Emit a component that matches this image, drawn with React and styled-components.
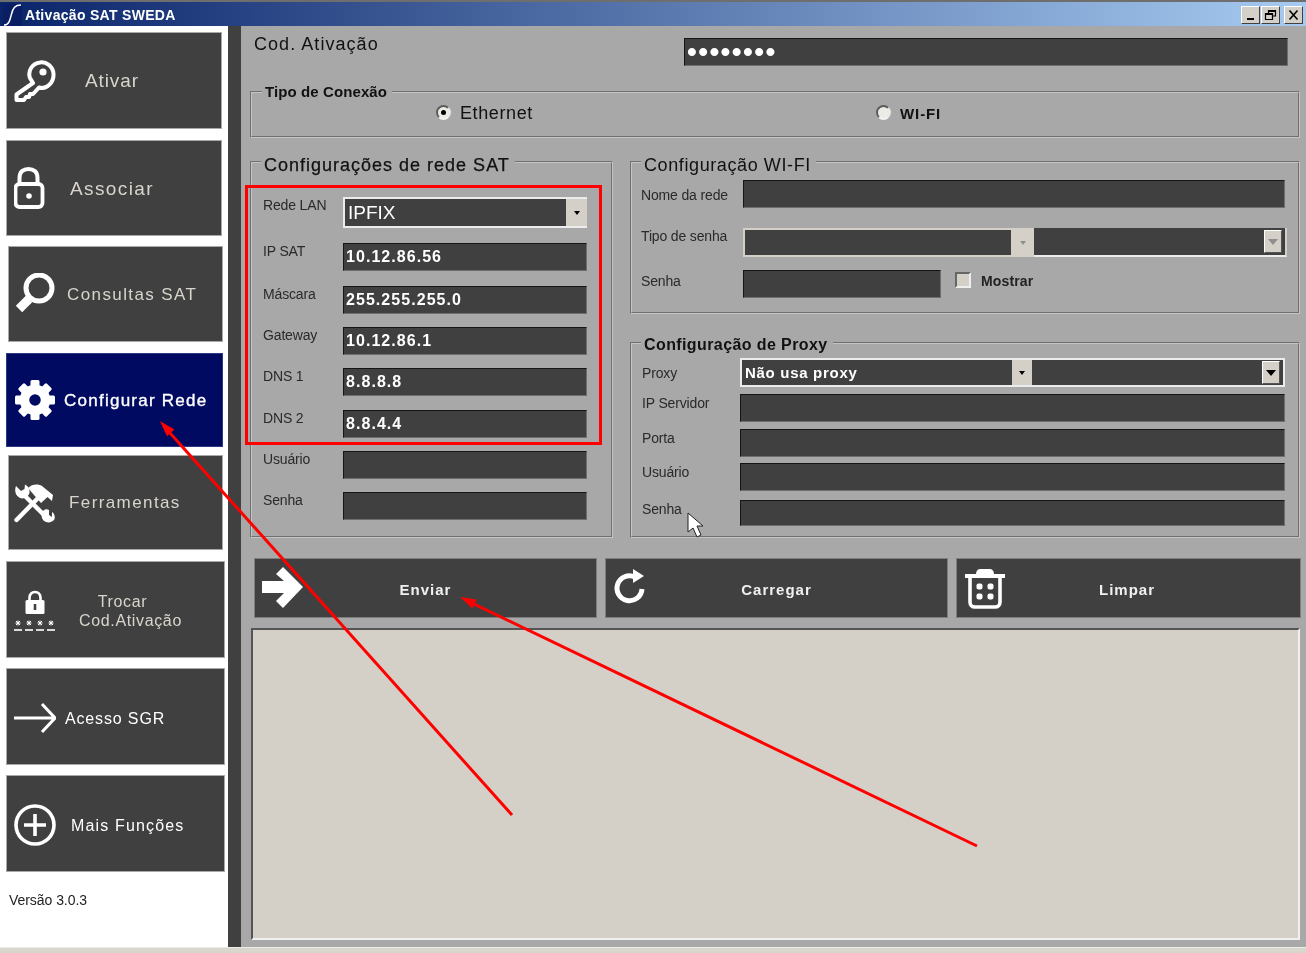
import React from 'react';
import styled, { createGlobalStyle } from 'styled-components';

const GlobalStyle = createGlobalStyle`
  html, body {
    margin: 0;
    padding: 0;
    background: #fff;
  }
  * {
    box-sizing: border-box;
  }
`;

const Page = styled.div`
  position: relative;
  width: 1306px;
  height: 953px;
  overflow: hidden;
`;

const Screen = styled.div`
  width: 1306px;
  height: 953px;
  display: flex;
  flex-direction: column;
  background: #fff;
  font-family: 'Liberation Sans', Arial, sans-serif;
  filter: blur(0.35px);
`;

const TitleBar = styled.div`
  height: 26px;
  flex: none;
  display: flex;
  align-items: center;
  padding: 2px 3px 0 3px;
  border-top: 2px solid #6e6e6e;
  background: linear-gradient(90deg, #0a246a 0%, #a6caf0 100%);
`;

const TitleLogo = styled.svg`
  width: 19px;
  height: 22px;
  flex: none;
`;

const TitleText = styled.span`
  margin-left: 3px;
  color: #fff;
  font-size: 14px;
  font-weight: bold;
  letter-spacing: 0.3px;
`;

const WindowButtons = styled.div`
  margin-left: auto;
  display: flex;
`;

const WindowButton = styled.div`
  width: 19px;
  height: 18px;
  margin-left: ${p => p.$gap || 0}px;
  background: #d4d0c8;
  border: 1px solid;
  border-color: #fff #404040 #404040 #fff;
  display: flex;
  align-items: center;
  justify-content: center;

  svg {
    width: 13px;
    height: 12px;
  }
`;

const Body = styled.div`
  flex: 1;
  display: flex;
  min-height: 0;
`;

const Sidebar = styled.aside`
  width: 228px;
  flex: none;
  display: flex;
  flex-direction: column;
  background: #fff;
`;

const SideButton = styled.div`
  width: ${p => p.$width}px;
  height: ${p => p.$height}px;
  margin-top: ${p => p.$top}px;
  margin-left: ${p => p.$left}px;
  flex: none;
  display: flex;
  align-items: center;
  padding-left: ${p => 14 - p.$left}px;
  padding-top: ${p => p.$drop || 0}px;
  background: ${p => (p.$active ? '#000a60' : '#404040')};
  border: 1px solid ${p => (p.$active ? '#2a3a80' : '#a9a9a9')};
`;

const SideIcon = styled.svg`
  width: 42px;
  height: 42px;
  flex: none;
  margin-left: -1px;
`;

const SideLabel = styled.span`
  margin-left: ${p => p.$offset}px;
  color: ${p => (p.$bright ? '#fff' : '#d8d5cd')};
  font-size: ${p => p.$size || 17}px;
  letter-spacing: ${p => p.$spacing ?? 1}px;
  line-height: 19px;
  text-align: center;
  white-space: nowrap;
  -webkit-text-stroke: ${p => (p.$heavy ? '0.35px' : '0')};
`;

const SideLine = styled.span`
  display: block;
  padding-right: ${p => p.$shift || 0}px;
`;

const Version = styled.div`
  margin: 20px 0 0 9px;
  color: #222;
  font-size: 14px;
  letter-spacing: -0.05px;
`;

const Divider = styled.div`
  width: 13px;
  flex: none;
  background: #404040;
`;

const Content = styled.main`
  flex: 1;
  min-width: 0;
  display: flex;
  flex-direction: column;
  padding: 0 6px 0 9px;
  background: #a8a8a8;
`;

const CodRow = styled.div`
  display: flex;
  padding: 12px 0 0 4px;
`;

const CodLabel = styled.div`
  width: 430px;
  color: #111;
  font-size: 18px;
  letter-spacing: 1.05px;
  line-height: 12px;
`;

const Group = styled.fieldset`
  margin: ${p => p.$top || 0}px 0 0;
  padding: 0 0 0 ${p => p.$pad || 0}px;
  min-width: 0;
  width: ${p => (p.$width ? `${p.$width}px` : 'auto')};
  height: ${p => p.$height}px;
  border: 2px groove #c4c4c4;
`;

const GroupTitle = styled.legend`
  height: 18px;
  margin-left: ${p => p.$shift ?? 0}px;
  padding: 0 5px 0 3px;
  color: #111;
  font-size: ${p => p.$size || 18}px;
  font-weight: ${p => (p.$bold ? 'bold' : 'normal')};
  letter-spacing: ${p => p.$spacing ?? 1}px;
  line-height: ${p => p.$line || 18}px;
  -webkit-text-stroke: ${p => (p.$heavy ? '0.25px' : '0')};
`;

const ConnectionRow = styled.div`
  display: flex;
  align-items: center;
  padding: 2px 0 0 184px;
`;

const RadioOption = styled.label`
  width: ${p => p.$width}px;
  display: flex;
  align-items: center;
  color: #111;
  font-size: ${p => p.$size}px;
  font-weight: ${p => (p.$bold ? 'bold' : 'normal')};
  letter-spacing: ${p => p.$spacing ?? 0.6}px;
`;

const RadioDot = styled.span`
  width: 15px;
  height: 15px;
  margin: -2px 9px 0 0;
  flex: none;
  display: flex;
  align-items: center;
  justify-content: center;
  border-radius: 50%;
  border: 2px solid;
  border-color: #5c5c5c #e8e8e8 #f2f2f2 #5c5c5c;
  background: #ecebe6;

  &::after {
    content: '';
    width: 5px;
    height: 5px;
    border-radius: 50%;
    background: ${p => (p.$checked ? '#000' : 'transparent')};
  }
`;

const Columns = styled.div`
  display: flex;
  gap: 17px;
  margin-top: 15px;
`;

const RightColumn = styled.div`
  flex: 1;
  min-width: 0;
  display: flex;
  flex-direction: column;
  gap: 20px;
`;

const Row = styled.div`
  display: flex;
  align-items: flex-start;
  margin-top: ${p => p.$top}px;
`;

const FieldLabel = styled.div`
  width: ${p => p.$width}px;
  flex: none;
  padding-top: ${p => p.$offset || 0}px;
  color: #2a2a2a;
  font-size: 14px;
  line-height: 16px;
  letter-spacing: -0.15px;
  white-space: nowrap;
`;

const Input = styled.div`
  width: ${p => p.$width}px;
  height: ${p => p.$height || 28}px;
  flex: none;
  display: flex;
  align-items: center;
  padding-left: 2px;
  background: #404040;
  border: 1px solid;
  border-color: #151515 #6e6e6e #6e6e6e #151515;
  color: #fff;
  font-size: ${p => p.$size || 16}px;
  font-weight: bold;
  letter-spacing: ${p => p.$spacing ?? 1.05}px;
`;

const Combo = styled.div`
  width: ${p => p.$width}px;
  height: ${p => p.$height}px;
  flex: none;
  display: flex;
`;

const ComboMain = styled.div`
  flex: 0 0 ${p => p.$width}px;
  display: flex;
  border: 2px solid ${p => (p.$light ? '#ececec' : '#d4d0c8')};
  border-right: 0;
  background: #d4d0c8;
`;

const ComboValue = styled.div`
  flex: 1;
  display: flex;
  align-items: center;
  padding-left: ${p => p.$pad || 3}px;
  background: #404040;
  color: #fff;
  font-size: ${p => p.$size || 15}px;
  font-weight: ${p => (p.$bold ? 'bold' : 'normal')};
  letter-spacing: ${p => p.$spacing ?? 0}px;
`;

const ComboArrow = styled.div`
  width: ${p => p.$width}px;
  flex: none;
  display: flex;
  align-items: center;
  justify-content: center;
  background: #d4d0c8;
`;

const Caret = styled.span`
  width: 0;
  height: 0;
  border-left: 3px solid transparent;
  border-right: 3px solid transparent;
  border-top: 4px solid ${p => (p.$muted ? '#8f8f8f' : '#000')};
`;

const ComboExtra = styled.div`
  flex: 1;
  display: flex;
  align-items: center;
  justify-content: flex-end;
  padding-right: 3px;
  background: #404040;
  border-bottom: 2px solid #ececec;
  border-right: 2px solid ${p => (p.$framed ? '#ececec' : '#d4d0c8')};
  border-top: ${p => (p.$framed ? '2px solid #ececec' : '0')};
`;

const DropButton = styled.div`
  width: 18px;
  height: 23px;
  display: flex;
  align-items: center;
  justify-content: center;
  background: #d4d0c8;
  border: 1px solid;
  border-color: #fff #555 #555 #fff;

  span {
    border-left-width: 5px;
    border-right-width: 5px;
    border-top-width: 6px;
  }
`;

const CheckBox = styled.span`
  width: 16px;
  height: 16px;
  margin: 2px 10px 0 14px;
  flex: none;
  background: #d4d0c8;
  border: 2px solid;
  border-color: #666 #eee #eee #666;
`;

const CheckLabel = styled.span`
  margin-top: 3px;
  color: #222;
  font-size: 14px;
  font-weight: bold;
  line-height: 16px;
  letter-spacing: 0.15px;
`;

const Actions = styled.div`
  display: flex;
  gap: 8px;
  margin: 20px 0 0 4px;
`;

const Action = styled.div`
  width: ${p => p.$width}px;
  height: 60px;
  flex: none;
  display: flex;
  align-items: center;
  padding-left: ${p => p.$pad}px;
  background: #404040;
  border: 1px solid #7d7d7d;
`;

const ActionIcon = styled.svg`
  width: 42px;
  height: 42px;
  flex: none;
`;

const ActionLabel = styled.span`
  flex: 1;
  padding: 2px ${p => p.$shift}px 0 0;
  color: #f0f0f0;
  font-size: 15px;
  font-weight: bold;
  letter-spacing: 1px;
  text-align: center;
`;

const LogBox = styled.div`
  height: 312px;
  margin: 10px 0 0 1px;
  background: #d4d0c8;
  border: 2px solid;
  border-color: #555 #f0f0f0 #f0f0f0 #555;
`;

const BottomStrip = styled.div`
  height: 6px;
  flex: none;
  background: #d9d6ce;
  border-top: 1px solid #ecebe6;
`;

const Annotations = styled.svg`
  position: absolute;
  inset: 0;
  width: 1306px;
  height: 953px;
  pointer-events: none;
`;

const HighlightBox = styled.div`
  position: absolute;
  left: 245px;
  top: 185px;
  width: 357px;
  height: 260px;
  border: 3px solid #f00;
  pointer-events: none;
`;

const menu = [
  {
    id: 'ativar', lines: [{ text: 'Ativar' }], top: 6, left: 6, width: 216, height: 97, offset: 29, size: 19, spacing: 0.9,
    icon: (
      <>
        <path d="M19 23 L2.5 34.5 V40 H10 L12 37 H15 L16 34 H19 L25 27.5 C33 30 40 22 39.5 14 C39 6 32 1.5 26 2.5 C18 3.5 13.5 11 16 18 Z" fill="none" stroke="#fff" strokeWidth="4" strokeLinejoin="round" />
        <circle cx="29" cy="12" r="3.6" fill="#fff" />
      </>
    ),
  },
  {
    id: 'associar', lines: [{ text: 'Associar' }], top: 11, left: 6, width: 216, height: 96, offset: 14, size: 19, spacing: 1.4,
    icon: (
      <>
        <path d="M5.5 18 V11 C5.5 4.5 9.5 2 14.5 2 C19.5 2 23.5 4.5 23.5 11 V18" fill="none" stroke="#fff" strokeWidth="4" />
        <rect x="1.5" y="17" width="27" height="23" rx="4" fill="none" stroke="#fff" strokeWidth="3.8" />
        <circle cx="15" cy="29" r="2.8" fill="#fff" />
      </>
    ),
  },
  {
    id: 'consultas', lines: [{ text: 'Consultas SAT' }], top: 10, left: 8, width: 215, height: 96, offset: 11, size: 17, spacing: 1.4,
    icon: (
      <>
        <circle cx="25" cy="15" r="13" fill="none" stroke="#fff" strokeWidth="5" />
        <path d="M15 26 L5 36" stroke="#fff" strokeWidth="9" />
      </>
    ),
  },
  {
    id: 'rede', lines: [{ text: 'Configurar Rede' }], top: 11, left: 6, width: 217, height: 94, offset: 8, size: 17, spacing: 1.25, bright: true, heavy: true, active: true,
    icon: (
      <>
        {[0, 45, 90, 135, 180, 225, 270, 315].map(a => (
          <rect key={a} x="16.5" y="1" width="9" height="10" rx="1.5" fill="#fff" transform={`rotate(${a} 21 21)`} />
        ))}
        <circle cx="21" cy="21" r="10.5" fill="none" stroke="#fff" strokeWidth="9.5" />
      </>
    ),
  },
  {
    id: 'ferramentas', lines: [{ text: 'Ferramentas' }], top: 8, left: 8, width: 215, height: 95, offset: 13, size: 17, spacing: 1.4,
    icon: (
      <>
        <path d="M2.5 38 L26 14" stroke="#fff" strokeWidth="4.4" strokeLinecap="round" />
        <path d="M14 6 C18 2 24 1.5 28 4 L39 13 L38 19 L33.5 15 L27 21 L20 13 Z" fill="#fff" />
        <path d="M9 12 L32 35" stroke="#fff" strokeWidth="4.4" />
        <path d="M2 4 C0 9 2 14 6 16 C10 17.5 14 15 15.5 11 C16 7 14 4 11 2.5 L10.5 7 L7 9 Z" fill="#fff" />
        <path d="M38 30 C41 32 41.5 36 40 38 C37 41 33 41 30 39 C27 36 27 32 29 29 C31 27 33 27 35 28 L35 33 L38 35 Z" fill="#fff" />
      </>
    ),
  },
  {
    id: 'trocar', lines: [{ text: 'Trocar', shift: 16 }, { text: 'Cod.Ativação' }], top: 11, left: 6, width: 219, height: 97, drop: 2, offset: 23, size: 16, spacing: 0.65,
    icon: (
      <>
        <path d="M15.5 11 V8 C15.5 4 18 2 21 2 C24 2 26.5 4 26.5 8 V11" fill="none" stroke="#fff" strokeWidth="2.6" />
        <rect x="11.5" y="10" width="19" height="14" rx="1.5" fill="#fff" />
        <path d="M21 14 V20" stroke="#404040" strokeWidth="2.6" />
        <g stroke="#fff" strokeWidth="1">
          {[4, 15, 26, 37].map(x => (
            <path key={x} d={`M${x - 2.5} 33 H${x + 2.5} M${x} 30.5 V35.5 M${x - 2} 31 L${x + 2} 35 M${x + 2} 31 L${x - 2} 35`} />
          ))}
        </g>
        <g stroke="#fff" strokeWidth="1.6">
          {[4, 15, 26, 37].map(x => (
            <path key={x} d={`M${x - 4} 40 H${x + 4}`} />
          ))}
        </g>
      </>
    ),
  },
  {
    id: 'sgr', lines: [{ text: 'Acesso SGR' }], top: 10, left: 6, width: 219, height: 97, drop: 3, offset: 9, size: 16, spacing: 0.85, bright: true,
    icon: <path d="M0 21 H40 M28 7 L41 21 L28 35" fill="none" stroke="#fff" strokeWidth="3" />,
  },
  {
    id: 'mais', lines: [{ text: 'Mais Funções' }], top: 10, left: 6, width: 219, height: 97, drop: 3, offset: 15, size: 16, spacing: 1.15, bright: true,
    icon: (
      <>
        <circle cx="21" cy="21" r="19" fill="none" stroke="#fff" strokeWidth="3.6" />
        <path d="M21 10 V32 M10 21 H32" stroke="#fff" strokeWidth="3.6" />
      </>
    ),
  },
];

const lanRows = [
  { label: 'IP SAT', value: '10.12.86.56', top: 15 },
  { label: 'Máscara', value: '255.255.255.0', top: 15 },
  { label: 'Gateway', value: '10.12.86.1', top: 13 },
  { label: 'DNS 1', value: '8.8.8.8', top: 13 },
  { label: 'DNS 2', value: '8.8.4.4', top: 14 },
  { label: 'Usuário', value: '', top: 13 },
  { label: 'Senha', value: '', top: 13 },
];

const proxyRows = [
  { label: 'IP Servidor', top: 7, height: 28 },
  { label: 'Porta', top: 7, height: 28 },
  { label: 'Usuário', top: 6, height: 28 },
  { label: 'Senha', top: 9, height: 26 },
];

function App() {
  return (
    <Page>
      <GlobalStyle />
      <Screen>
        <TitleBar>
          <TitleLogo viewBox="0 0 19 22">
            <rect width="19" height="22" fill="#0a1f63" />
            <path d="M1 21 C6 21 7 16 8.5 10 C10 4 12 1 18 1" fill="none" stroke="#fff" strokeWidth="1.5" />
          </TitleLogo>
          <TitleText>Ativação SAT SWEDA</TitleText>
          <WindowButtons>
            <WindowButton>
              <svg viewBox="0 0 13 12"><rect x="3" y="9" width="7" height="2" fill="#000" /></svg>
            </WindowButton>
            <WindowButton $gap={1}>
              <svg viewBox="0 0 13 12"><path d="M4.5 4 V1.5 H11.5 V7 H9 M1.5 4.5 H8.5 V10.5 H1.5 Z M1.5 5.5 H8.5 M4.5 2.5 H11.5" fill="none" stroke="#000" strokeWidth="1.2" /></svg>
            </WindowButton>
            <WindowButton $gap={4}>
              <svg viewBox="0 0 13 12"><path d="M2.5 1.5 L10.5 10.5 M10.5 1.5 L2.5 10.5" stroke="#000" strokeWidth="1.6" /></svg>
            </WindowButton>
          </WindowButtons>
        </TitleBar>

        <Body>
          <Sidebar>
            {menu.map(item => (
              <SideButton key={item.id} $top={item.top} $left={item.left} $width={item.width} $height={item.height} $drop={item.drop} $active={item.active}>
                <SideIcon viewBox="0 0 42 42">{item.icon}</SideIcon>
                <SideLabel $offset={item.offset} $size={item.size} $spacing={item.spacing} $bright={item.bright} $heavy={item.heavy}>
                  {item.lines.map(line => (
                    <SideLine key={line.text} $shift={line.shift}>{line.text}</SideLine>
                  ))}
                </SideLabel>
              </SideButton>
            ))}
            <Version>Versão 3.0.3</Version>
          </Sidebar>

          <Divider />

          <Content>
            <CodRow>
              <CodLabel>Cod. Ativação</CodLabel>
              <Input $width={604} $size={28} $spacing={1.4}>••••••••</Input>
            </CodRow>

            <Group $top={17} $height={55}>
              <GroupTitle $size={15} $bold $spacing={0.1} $shift={10}>Tipo de Conexão</GroupTitle>
              <ConnectionRow>
                <RadioOption $width={440} $size={18}>
                  <RadioDot $checked />Ethernet
                </RadioOption>
                <RadioOption $width={100} $size={15} $bold $spacing={0.9}>
                  <RadioDot />WI-FI
                </RadioOption>
              </ConnectionRow>
            </Group>

            <Columns>
              <Group $width={363} $height={385} $pad={11}>
                <GroupTitle $shift={-2} $line={24} $heavy>Configurações de rede SAT</GroupTitle>
                <Row $top={26}>
                  <FieldLabel $width={80}>Rede LAN</FieldLabel>
                  <Combo $width={244} $height={31}>
                    <ComboMain $width={244} $light>
                      <ComboValue $size={19} $pad={3}>IPFIX</ComboValue>
                      <ComboArrow $width={21}><Caret /></ComboArrow>
                    </ComboMain>
                  </Combo>
                </Row>
                {lanRows.map(row => (
                  <Row key={row.label} $top={row.top}>
                    <FieldLabel $width={80}>{row.label}</FieldLabel>
                    <Input $width={244}>{row.value}</Input>
                  </Row>
                ))}
              </Group>

              <RightColumn>
                <Group $height={161} $pad={9}>
                  <GroupTitle $spacing={0.6} $line={24}>Configuração WI-FI</GroupTitle>
                  <Row $top={9}>
                    <FieldLabel $width={102} $offset={7}>Nome da rede</FieldLabel>
                    <Input $width={542} />
                  </Row>
                  <Row $top={20}>
                    <FieldLabel $width={102}>Tipo de senha</FieldLabel>
                    <Combo $width={544} $height={29}>
                      <ComboMain $width={291}>
                        <ComboValue />
                        <ComboArrow $width={23}><Caret $muted /></ComboArrow>
                      </ComboMain>
                      <ComboExtra>
                        <DropButton><Caret $muted /></DropButton>
                      </ComboExtra>
                    </Combo>
                  </Row>
                  <Row $top={13}>
                    <FieldLabel $width={102} $offset={3}>Senha</FieldLabel>
                    <Input $width={198} />
                    <CheckBox />
                    <CheckLabel>Mostrar</CheckLabel>
                  </Row>
                </Group>

                <Group $height={204} $pad={10}>
                  <GroupTitle $size={16} $bold $spacing={0.4} $shift={-1} $line={22}>Configuração de Proxy</GroupTitle>
                  <Row $top={6}>
                    <FieldLabel $width={98} $offset={7}>Proxy</FieldLabel>
                    <Combo $width={545} $height={29}>
                      <ComboMain $width={292} $light>
                        <ComboValue $size={15} $bold $spacing={0.7}>Não usa proxy</ComboValue>
                        <ComboArrow $width={20}><Caret /></ComboArrow>
                      </ComboMain>
                      <ComboExtra $framed>
                        <DropButton><Caret /></DropButton>
                      </ComboExtra>
                    </Combo>
                  </Row>
                  {proxyRows.map(row => (
                    <Row key={row.label} $top={row.top}>
                      <FieldLabel $width={98} $offset={1}>{row.label}</FieldLabel>
                      <Input $width={545} $height={row.height} />
                    </Row>
                  ))}
                </Group>
              </RightColumn>
            </Columns>

            <Actions>
              <Action $width={343} $pad={7}>
                <ActionIcon viewBox="0 0 42 42">
                  <polygon points="14,7 21,0 41,20 21,41 14,34 22,26 0,26 0,14 22,14" fill="#fff" />
                </ActionIcon>
                <ActionLabel $shift={49}>Enviar</ActionLabel>
              </Action>
              <Action $width={343} $pad={7}>
                <ActionIcon viewBox="0 0 42 42">
                  <path d="M22 10 A12.5 12.5 0 1 0 29 22" fill="none" stroke="#fff" strokeWidth="5" />
                  <polygon points="20,2 31,9 20,16" fill="#fff" />
                </ActionIcon>
                <ActionLabel $shift={49}>Carregar</ActionLabel>
              </Action>
              <Action $width={345} $pad={7}>
                <ActionIcon viewBox="0 0 42 42">
                  <path d="M1 9 H41" stroke="#fff" strokeWidth="4" />
                  <path d="M12 8 C12 3 14 2 17 2 H25 C28 2 30 3 30 8 Z" fill="#fff" />
                  <path d="M6 10 V35 C6 38 8 40 11 40 H31 C34 40 36 38 36 35 V10" fill="none" stroke="#fff" strokeWidth="3.6" />
                  <rect x="12.5" y="16.5" width="6" height="6" rx="2" fill="#fff" />
                  <rect x="23.5" y="16.5" width="6" height="6" rx="2" fill="#fff" />
                  <rect x="12.5" y="26.5" width="6" height="6" rx="2" fill="#fff" />
                  <rect x="23.5" y="26.5" width="6" height="6" rx="2" fill="#fff" />
                </ActionIcon>
                <ActionLabel $shift={52}>Limpar</ActionLabel>
              </Action>
            </Actions>

            <LogBox />
          </Content>
        </Body>
        <BottomStrip />
      </Screen>

      <HighlightBox />
      <Annotations viewBox="0 0 1306 953">
        <path d="M512 815 L170 433" stroke="#f00" strokeWidth="3" />
        <polygon points="160,421 174.4,429.6 167,436.3" fill="#f00" />
        <path d="M977 846 L474 604" stroke="#f00" strokeWidth="3" />
        <polygon points="460,597 472.3,608.4 476.6,599.4" fill="#f00" />
        <polygon points="688,513 688,532 693,528 697,537 701,535 697,526 703,526" fill="#fff" stroke="#222" strokeWidth="1" />
      </Annotations>
    </Page>
  );
}

export default App;
